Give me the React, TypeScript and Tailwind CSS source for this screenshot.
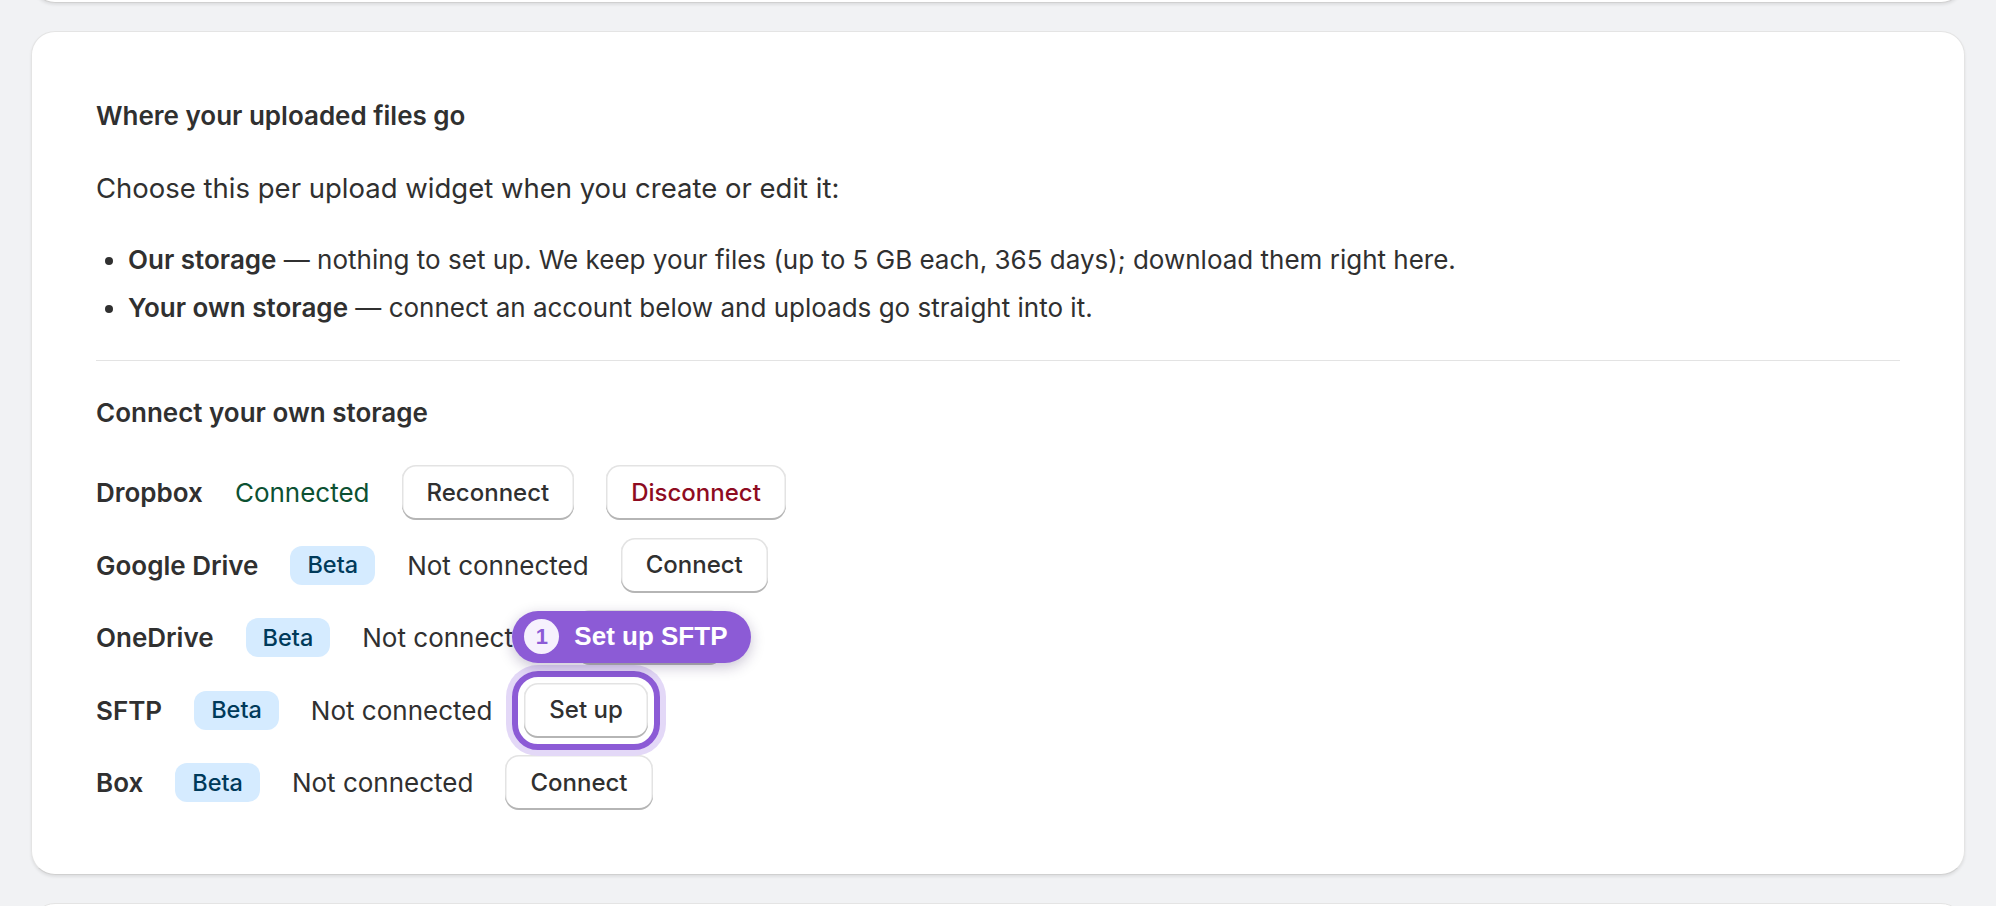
import React from "react";

type Btn = { label: string; danger?: boolean };

function Button({ label, danger }: Btn) {
  return (
    <button
      type="button"
      className={
        "h-[55px] shrink-0 rounded-[14px] bg-white px-[25px] text-[24px] font-[550] leading-none shadow-[inset_0_-2px_0_0_#b5b5b5,inset_0_0_0_1.5px_#e3e3e3] " +
        (danger ? "text-[#8e0b21]" : "text-[#303030]")
      }
    >
      {label}
    </button>
  );
}

function Badge() {
  return (
    <span className="inline-flex h-[39px] shrink-0 items-center rounded-[12px] bg-[#d5ebff] px-[17px] text-[23.5px] font-medium text-[#003a5a]">
      Beta
    </span>
  );
}

function TourTarget({ children }: { children: React.ReactNode }) {
  return (
    <div className="relative shrink-0">
      {children}
      <div className="pointer-events-none absolute -inset-[12px] z-10 rounded-[26px] border-[6px] border-[#8c5bd6] shadow-[0_0_0_6px_#e3d8f7]" />
      <div className="absolute bottom-[calc(100%+20px)] left-[-12px] z-20 flex h-[52px] items-center gap-[15px] whitespace-nowrap rounded-full bg-[#8c5bd6] pl-[12px] pr-[24px] shadow-[0_4px_14px_rgba(40,20,80,0.25)]">
        <span className="flex h-[35px] w-[35px] items-center justify-center rounded-full bg-[#f6f1fd] font-['Liberation_Sans',Arial,sans-serif] text-[22px] font-bold text-[#8c5bd6]">
          1
        </span>
        <span className="font-['Liberation_Sans',Arial,sans-serif] text-[26px] font-bold text-white">
          Set up SFTP
        </span>
      </div>
    </div>
  );
}

const status = "text-[26px] text-[#303030] shrink-0 whitespace-nowrap";
const name = "text-[26px] font-semibold text-[#303030] shrink-0 whitespace-nowrap";

export default function App() {
  return (
    <div className="flex h-[906px] flex-col gap-[28px] overflow-hidden bg-[#f1f2f4] px-[31px] font-['Inter','Noto_Sans',sans-serif] text-[#303030]">
      <div className="-mt-[197px] h-[200px] shrink-0 rounded-[24px] border border-[#e4e4e4] border-b-[#d0d0d0] bg-white shadow-[0_2px_3px_rgba(0,0,0,0.08)]" />

      <section className="flex shrink-0 flex-col gap-[32px] rounded-[24px] border border-[#e4e4e4] border-b-[#d0d0d0] bg-white p-[64px] shadow-[0_2px_3px_rgba(0,0,0,0.08)]">
        <h2 className="text-[26px] font-semibold leading-[40px]">Where your uploaded files go</h2>
        <p className="text-[27.5px] leading-[40px]">Choose this per upload widget when you create or edit it:</p>
        <ul className="flex list-disc flex-col gap-[8px] pl-[32px] text-[26px] leading-[40px]">
          <li>
            <strong className="font-semibold">Our storage</strong> — nothing to set up. We keep your files (up to 5 GB
            each, 365 days); download them right here.
          </li>
          <li>
            <strong className="font-semibold">Your own storage</strong> — connect an account below and uploads go
            straight into it.
          </li>
        </ul>
        <hr className="border-0 border-t border-[#e3e3e3]" />
        <h3 className="text-[26px] font-semibold leading-[40px]">Connect your own storage</h3>

        <div className="flex flex-col gap-[17.5px]">
          <div className="flex items-center gap-[32px]">
            <span className={name}>Dropbox</span>
            <span className="shrink-0 text-[26px] text-[#0c5132]">Connected</span>
            <Button label="Reconnect" />
            <Button label="Disconnect" danger />
          </div>
          <div className="flex items-center gap-[32px]">
            <span className={name}>Google Drive</span>
            <Badge />
            <span className={status}>Not connected</span>
            <Button label="Connect" />
          </div>
          <div className="flex items-center gap-[32px]">
            <span className={name}>OneDrive</span>
            <Badge />
            <span className={status}>Not connected</span>
            <Button label="Connect" />
          </div>
          <div className="flex items-center gap-[32px]">
            <span className={name}>SFTP</span>
            <Badge />
            <span className={status}>Not connected</span>
            <TourTarget>
              <Button label="Set up" />
            </TourTarget>
          </div>
          <div className="flex items-center gap-[32px]">
            <span className={name}>Box</span>
            <Badge />
            <span className={status}>Not connected</span>
            <Button label="Connect" />
          </div>
        </div>
      </section>

      <div className="h-[200px] shrink-0 rounded-[24px] border border-[#e4e4e4] bg-white" />
    </div>
  );
}
